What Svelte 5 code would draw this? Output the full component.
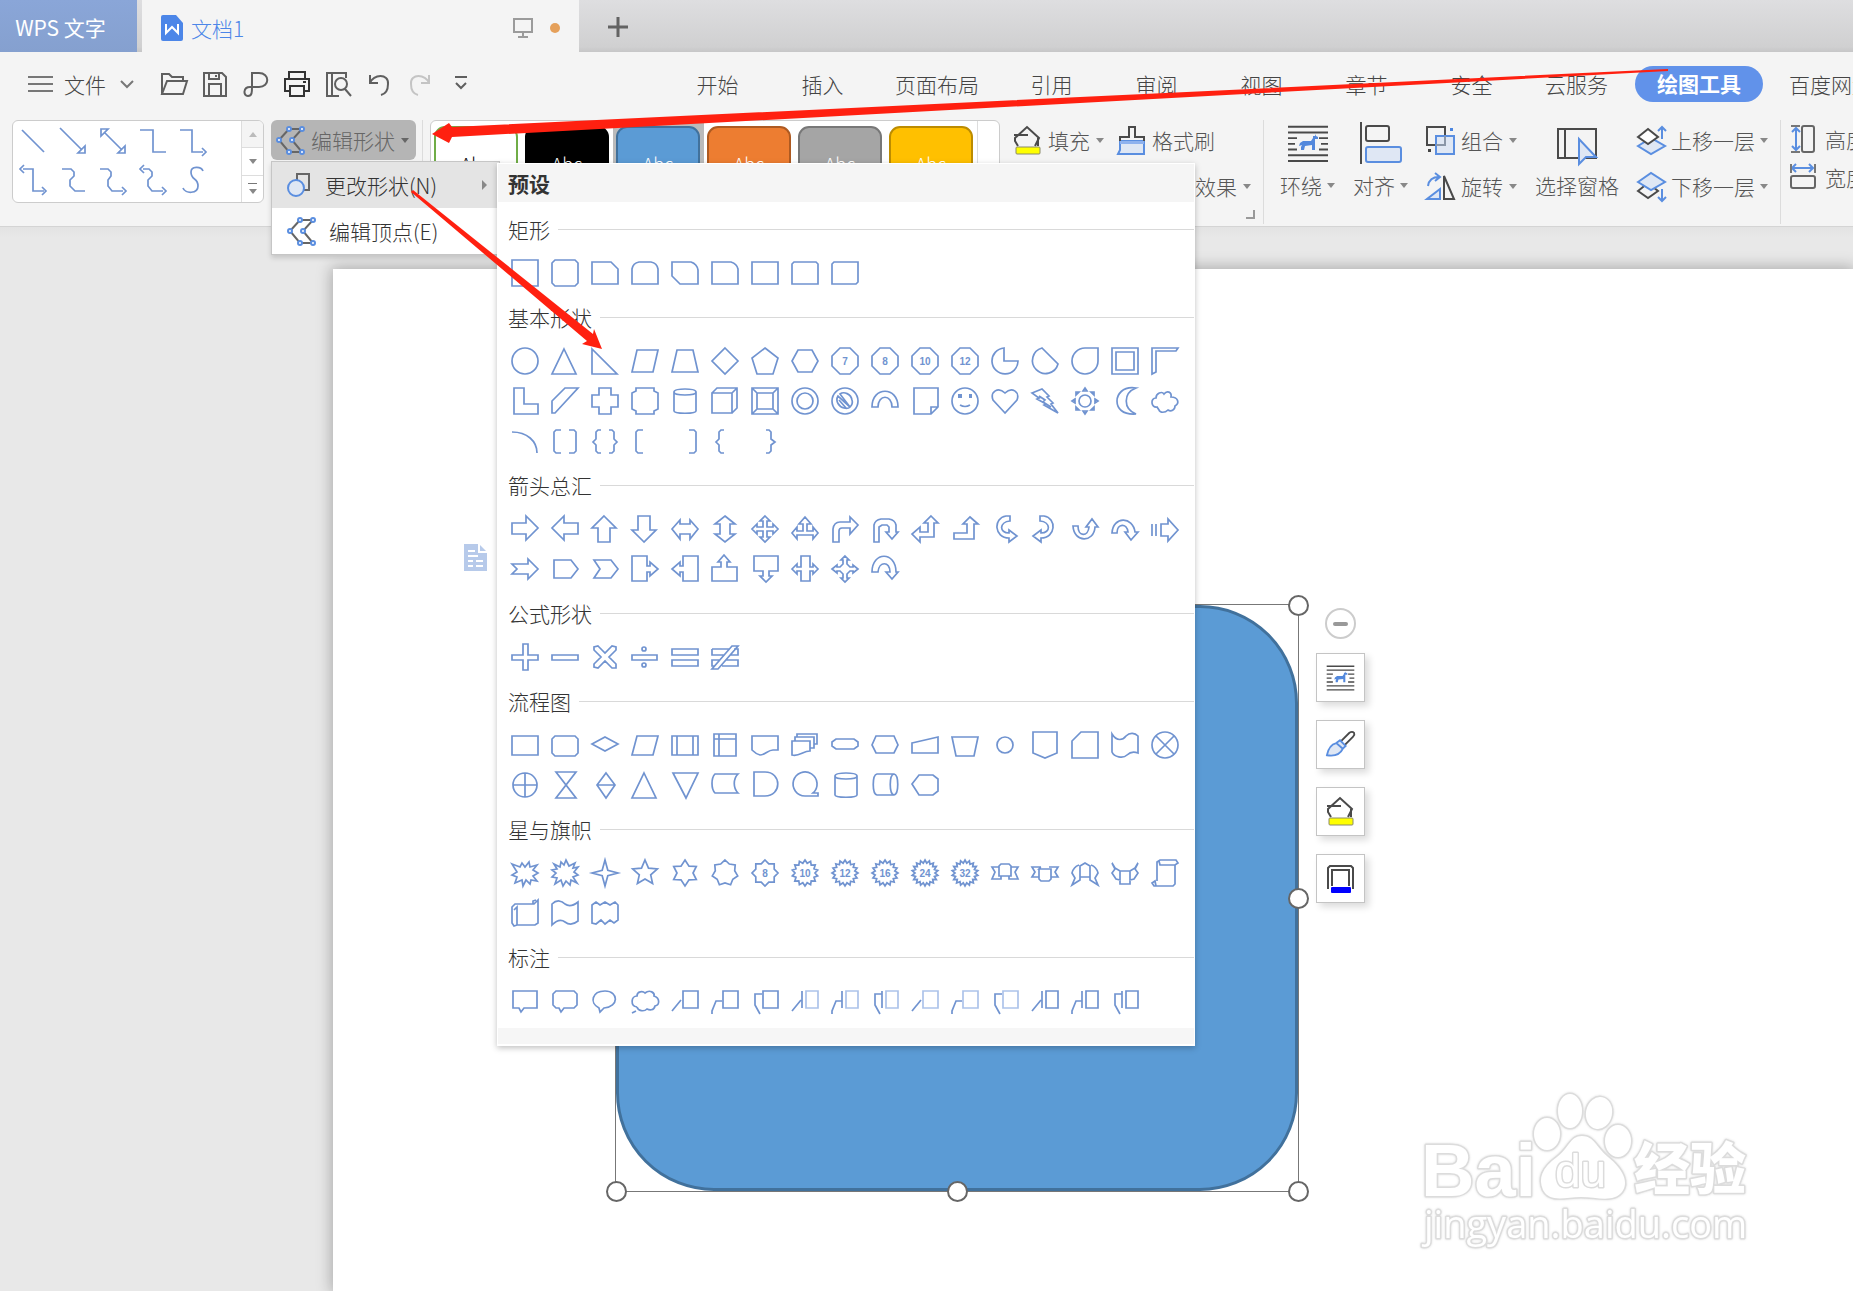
<script lang="ts">
  type Shape = { d: string; label?: string; light?: string; dots?: string };

  const box = "M1 3H27V25H1Z";
  const octagon = "M9 1H19L27 9V19L19 27H9L1 19V9Z";

  function circle(r: number, cx = 14, cy = 14): string {
    return `M${cx - r} ${cy}a${r} ${r} 0 1 0 ${r * 2} 0a${r} ${r} 0 1 0 ${-r * 2} 0Z`;
  }

  function star(points: number, outer: number, inner: number): string {
    const pts: string[] = [];
    for (let i = 0; i < points * 2; i++) {
      const r = i % 2 ? inner : outer;
      const a = (Math.PI * i) / points - Math.PI / 2;
      pts.push(`${(14 + r * Math.cos(a)).toFixed(1)} ${(14 + r * Math.sin(a)).toFixed(1)}`);
    }
    return `M${pts.join("L")}Z`;
  }

  function plain(...paths: string[]): Shape[] {
    return paths.map((d) => ({ d }));
  }

  const leaders = ["M1 24L10 13", "M1 27V24L5 14H11", "M11 7H4V18L9 27"];

  function callouts(bar: boolean, light: boolean): Shape[] {
    const frame = bar ? "M15 4H27V21H15Z" : "M12 4H27V21H12Z";
    return leaders.map((lead) => ({
      d: lead + (bar ? "M11 4V21" : "") + (light ? "" : frame),
      light: light ? frame : undefined,
    }));
  }

  const sections: { title: string; shapes: Shape[] }[] = [
    {
      title: "矩形",
      shapes: plain(
        "M1 1H27V27H1Z",
        "M4 1H24L27 4V24L24 27H4L1 24V4Z",
        "M1 3H20L27 10V25H1Z",
        "M1 25V10Q2 4 8 3H20Q26 4 27 10V25Z",
        "M1 3H20Q26 5 27 11V25H9L1 17Z",
        "M1 3H20Q26 5 27 10V25H1Z",
        box,
        "M1 25V5L3 3H25L27 5V25Z",
        "M1 5L3 3H27V23L25 25H1Z",
      ),
    },
    {
      title: "基本形状",
      shapes: [
        ...plain(
          circle(13),
          "M13 2L25 27H1Z",
          "M1 2V27H26Z",
          "M6 3H27L22 25H1Z",
          "M6 3H22L27 25H1Z",
          "M14 1L27 14L14 27L1 14Z",
          "M14 1L27 11L22 27H6L1 11Z",
          "M7 3H21L27 14L21 25H7L1 14Z",
        ),
        { d: octagon, label: "7" },
        { d: octagon, label: "8" },
        { d: octagon, label: "10" },
        { d: octagon, label: "12" },
        ...plain(
          "M13 1A13 13 0 1 0 27 14H13Z",
          "M11 1L27 17A13 13 0 1 1 11 1Z",
          "M27 1V14A13 13 0 1 1 14 1Z",
          "M1 1H27V27H1ZM5 5H23V23H5Z",
          "M1 27V1H27L25 4H5V25Z",
          "M3 1H13V17H27V27H3Z",
          "M14 1H27L4 26H1V14Z",
          "M8 1H20V8H27V20H20V27H8V20H1V8H8Z",
          "M5 1H23V4L27 6V22L23 24V27H5V24L1 22V6L5 4Z",
          "M3 5V24C3 27 25 27 25 24V5C25 1 3 1 3 5C3 9 25 9 25 5",
          "M1 6H21V26H1ZM1 6L6 1H26V21L21 26M21 6L26 1",
          "M1 1H27V27H1ZM6 6H22V22H6ZM1 1L6 6M27 1L22 6M1 27L6 22M27 27L22 22",
          circle(13) + circle(8),
          circle(13) + "M9 7C13 4 20 7 21 13C22 16 21 18 19 20ZM7 9C4 14 8 20 13 21C16 22 18 21 19 20ZM8 13L15 21",
          "M1 20C1 -1 27 -1 27 20H21C21 7 7 7 7 20Z",
          "M3 1H27V20L20 27H3ZM20 27V20H27",
        ),
        { d: circle(13) + "M9 18Q14 21 19 18", dots: "M7 7H11V11H7ZM18 7H21V11H18Z" },
        ...plain(
          "M14 26L2 13C-1 5 7 -1 14 6C21 -1 29 5 26 13Z",
          "M1 6L11 2L18 9L16 10L22 16L20 17L27 26L13 18L15 17L6 12L8 11ZM8 9L14 13L12 15L20 20",
          circle(6) + "M12 4L14 1L16 4ZM12 24L14 27L16 24ZM4 12L1 14L4 16ZM24 12L27 14L24 16ZM5 5H8L5 8ZM23 5H20L23 8ZM5 23H8L5 20ZM23 23H20L23 20Z",
          "M25 1C11 -1 6 8 6 14C6 21 11 28 25 27C12 22 12 6 25 1Z",
          "M6 20C0 21 -1 11 5 11C5 6 11 4 13 7C16 3 21 5 20 10C27 10 29 16 24 19C24 23 20 25 17 23C14 26 9 26 8 23Z",
          "M1 5C16 5 26 14 26 26",
          "M10 3H5L3 5V24L5 26H10M18 3H23L25 5V24L23 26H18",
          "M10 3H7L5 5V12L2 15L5 18V24L7 26H10M18 3H21L23 5V12L26 15L23 18V24L21 26H18",
          "M12 3H7L5 5V24L7 26H12",
          "M18 3H23L25 5V24L23 26H18",
          "M13 3H10L8 5V12L5 15L8 18V24L10 26H13",
          "M15 3H18L20 5V12L24 15L20 18V24L18 26H15",
        ),
      ],
    },
    {
      title: "箭头总汇",
      shapes: plain(
        "M1 8H15V1L27 13L15 25V19H1Z",
        "M27 8H13V1L1 13L13 25V19H27Z",
        "M13 1L25 13H19V27H7V13H1Z",
        "M13 27L1 15H7V1H19V15H25Z",
        "M1 14L9 5V9H19V5L27 14L19 24V19H9V24Z",
        "M14 1L24 9H19V19H24L14 27L4 19H9V9H4Z",
        "M14 1L19 6H16V12H22V9L27 14L22 19V16H16V22H19L14 27L9 22H12V16H6V19L1 14L6 9V12H12V6H9Z",
        "M14 2L20 9H16V16H22V12L27 18L22 24V20H6V24L1 18L6 12V16H12V9H8Z",
        "M2 27V14Q3 7 9 7H19V2L27 10L19 19V13H11Q8 13 8 16V27Z",
        "M3 27V10Q4 5 10 4H18Q24 5 25 10V17H27L21 24L15 17H18V12L16 10H11L8 12V27Z",
        "M20 1L27 8H23V22H9V27L1 19L9 12V17H17V8H13Z",
        "M19 2L27 9H23V24H3V18H16V9H12Z",
        "M19 1H15C2 3 3 23 18 23V27L26 21L18 15V18C8 18 8 7 19 6Z",
        "M9 1H13C26 3 25 23 10 23V27L2 21L10 15V18C20 18 20 7 9 6Z",
        "M2 11H7C7 22 17 22 18 12H15L21 4L27 12H24C23 28 3 28 2 11Z",
        "M1 18H6C6 8 16 8 17 17H14L20 25L27 17H24C22 1 2 1 1 18Z",
        "M1 9V21M5 9V21M10 9H17V4L27 15L17 26V21H10Z",
        "M1 9H17V4L27 14L17 24V19H1L6 14Z",
        "M3 5H20L27 14L20 23H3Z",
        "M3 5H20L27 14L20 23H3L9 14Z",
        "M1 1H16V11H19V7L27 14L19 21V17H16V26H1Z",
        "M27 1H12V11H9V7L1 14L9 21V17H12V26H27Z",
        "M1 12H10V7H7L13 0L19 7H16V12H26V26H1Z",
        "M3 1H27V16H18V21H21L15 27L9 21H12V16H3Z",
        "M1 14L6 9V12H10V1H19V12H22V9L27 14L22 19V16H19V26H10V16H6V19Z",
        "M14 1L18 5H16V9L19 12H22V10L27 14L22 18V16H19L16 19V23H18L14 27L10 23H12V19L9 16H6V18L1 14L6 10V12H9L12 9V5H10Z",
        "M1 17C1 -4 25 -4 25 17H27L21 24L15 17H19C19 6 8 6 7 17Z",
      ),
    },
    {
      title: "公式形状",
      shapes: plain(
        "M12 1H17V12H27V17H17V27H12V17H1V12H12Z",
        "M1 12H27V17H1Z",
        "M7 3L14 10L21 3L25 4V7L18 14L25 21V25L21 25L14 18L7 25L3 24V21L10 14L3 7V4Z",
        "M1 12H26V17H1Z" + circle(2, 13, 6) + circle(2, 13, 22),
        "M1 6H27V12H1ZM1 17H27V23H1Z",
        "M1 6H18M1 6V12H13M23 6H27V12H19M15 17H27V23H11M9 17H1V23H4M1 26H7L27 3H21Z",
      ),
    },
    {
      title: "流程图",
      shapes: plain(
        "M1 5H27V24H1Z",
        "M4 5H24L27 8V22L24 25H4L1 22V8Z",
        "M14 6L27 13L14 20L1 13Z",
        "M6 5H27L22 24H1Z",
        "M1 5H27V24H1ZM6 5V24M22 5V24",
        "M3 3H25V25H3ZM8 3V25M3 8H25",
        "M1 5H27V19H22C17 19 14 24 9 24Q5 23 1 19Z",
        "M1 10H19V20C12 20 8 26 1 24ZM4 10V6H23V17H19M6 6V3H26V13H23",
        "M5 8H23L27 11V15L23 18H5L1 15V11Z",
        "M5 5H23L27 14L23 22H5L1 14Z",
        "M1 12L27 6V22H1Z",
        "M1 6H27L23 25H5Z",
        circle(8),
        "M2 1H26V22L14 27L2 22Z",
        "M10 1H27V27H1V10Z",
        "M1 3C6 11 12 9 15 5C19 1 24 2 27 5V22C22 20 18 22 16 24C12 28 3 26 1 21Z",
        circle(13) + "M5 5L23 23M23 5L5 23",
        circle(12) + "M14 2V26M2 14H26",
        "M5 1H25L5 27H25Z",
        "M15 2L24 14L15 27L6 14ZM6 14H24",
        "M13 2L25 27H1Z",
        "M2 2H27L15 27Z",
        "M4 3H27C22 8 22 17 27 22H4C0 18 0 7 4 3Z",
        "M3 1H14C31 1 31 25 14 25H3Z",
        "M14 25A12 12 0 1 1 22 22H27V25Z",
        "M4 5V24C4 27 26 27 26 24V5C26 1 4 1 4 5C4 9 26 9 26 5",
        "M6 3H23C28 4 28 23 23 24H6C1 23 1 4 6 3ZM23 3C18 4 18 23 23 24",
        "M1 13L8 4H22L27 8V20L22 24H8Z",
      ),
    },
    {
      title: "星与旗帜",
      shapes: [
        ...plain(
          "M1 5L9 8L11 4L14 8L18 3L19 8L26 6L22 11L27 14L22 17L26 22L20 21L19 25L15 21L12 27L11 21L4 24L6 18L1 16L6 13Z",
          "M3 5L9 8L10 3L13 6L15 1L18 7L24 4L22 9L27 8L23 13L27 16L22 18L26 24L20 21L19 26L15 22L12 27L10 21L4 25L6 19L1 18L5 14L1 11L6 10Z",
          star(4, 13, 4),
          star(5, 13, 6),
          star(6, 13, 8),
          star(7, 13, 10),
        ),
        { d: star(8, 13, 10), label: "8" },
        { d: star(14, 13, 10), label: "10" },
        { d: star(16, 13, 10), label: "12" },
        { d: star(16, 13, 10), label: "16" },
        { d: star(18, 13, 10), label: "24" },
        { d: star(18, 13, 10), label: "32" },
        ...plain(
          "M8 8H1L4 13L1 20H10V17H18V20H27L24 13L27 8H20M8 17V7L10 5H18L20 7V17Z",
          "M10 8H1L4 13L1 18H8M18 8H27L24 13L27 18H20M8 10V20L10 22H18L20 20V10H8L10 8",
          "M8 6C5 7 2 10 1 14L4 19L1 26L9 21V7L14 4L19 7V21L27 26L24 19L27 14C26 10 23 7 20 6M9 18H19",
          "M1 4L4 10L1 14L5 20L9 21V12L4 9ZM27 4L24 10L27 14L23 20L19 21V12L24 9ZM9 12H19V25H9Z",
          "M6 22V3L9 1H25L27 4L24 6H9L8 2M24 6V25L22 27H3L1 24L4 22L5 27",
          "M1 8L4 5H23L27 1V24L24 26H6L3 27L1 24ZM6 26V8L3 11M22 5V2L25 1",
          "M1 5C6 0 11 2 14 5C18 8 22 7 27 3V22C22 26 18 26 14 23C10 20 6 21 1 26Z",
          "M1 6L5 3L9 6L14 3L19 6L24 3L27 6V21L23 24L19 21L14 25L10 21L5 25L1 24Z",
        ),
      ],
    },
    {
      title: "标注",
      shapes: [
        ...plain(
          "M2 4H26V21H13L10 25L8 21H2Z",
          "M5 4H23L26 7V18L23 21H13L10 25L8 21H5L2 18V7Z",
          "M8 21C-2 16 1 4 14 4C28 4 28 20 13 21L9 25Z",
          "M6 20C-1 19 0 9 6 9C6 4 12 4 14 6C19 2 24 6 23 9C29 11 29 18 24 19C23 24 18 23 16 22C13 25 7 24 6 20M5 24L1 26",
        ),
        ...callouts(false, false),
        ...callouts(true, true),
        ...callouts(false, true),
        ...callouts(true, false),
      ],
    },
  ];

  const connectors = [
    "M3 3L25 25",
    "M1 1L22 22M26 26V19L19 26Z",
    "M6 6L22 22M2 2V9L9 2ZM26 26V19L19 26Z",
    "M1 3H14V25H27",
    "M1 3H13V25H24M23 21L27 25L23 29",
    "M4 3H14V25H25M5 -1L1 3L5 7M23 21L27 25L23 29",
    "M3 3H12L15 6V10L11 14V20L16 25H26",
    "M1 3H9L12 6V10L9 14V20L13 25H24M23 21L27 25L23 29",
    "M4 3H10L13 6V10L9 14V20L13 25H24M5 -1L1 3L5 7M23 21L27 25L23 29",
    "M24 5C22 0 12 0 12 6C12 15 19 11 19 20C19 28 6 28 4 22",
  ];

  const quickTools = [
    { name: "打开", d: "M2 24V4H9L12 7H23V11M2 24L7 11H27L23 24Z" },
    { name: "保存", d: "M3 3H21L25 7V26H3ZM8 26V14H20V26M8 3V9H18V3M15 5V7" },
    { name: "输出为PDF", d: "M10 17V3H17C28 3 28 17 17 17H8C1 17 1 26 6 26C10 26 10 22 10 17" },
    { name: "打印", d: "M6 9V2H22V9M6 21H2V9H26V21H22M7 16H21V26H7ZM20 12H23", dark: true },
    { name: "打印预览", d: "M15 26H3V3H22V8M8 3V26M17 8A6 6 0 1 0 17 20A6 6 0 1 0 17 8M21 19L27 26" },
    { name: "撤销", d: "M5 5V13H13M5 13C8 4 24 3 23 14C23 20 20 24 16 25" },
    { name: "恢复", d: "M23 5V13H15M23 13C20 4 4 3 5 14C5 20 8 24 12 25", faded: true },
    { name: "更多", d: "M8 7H20M9 13L14 18L19 13" },
  ];

  const menus = ["开始", "插入", "页面布局", "引用", "审阅", "视图", "章节", "安全", "云服务", "绘图工具", "百度网盘"];
  let activeMenu = $state("绘图工具");

  const styles = ["green", "black", "blue", "orange", "gray", "yellow"];
  let activeStyle = $state("blue");
</script>

{#snippet shapeIcon(shape: Shape)}
  <svg class="shape" viewBox="0 0 28 28" aria-hidden="true">
    <path d={shape.d} />
    {#if shape.light}<path class="pale" d={shape.light} />{/if}
    {#if shape.dots}<path class="solid" d={shape.dots} />{/if}
    {#if shape.label}<text x="14" y="18">{shape.label}</text>{/if}
  </svg>
{/snippet}

{#snippet vertexIcon()}
  <svg class="icon" viewBox="0 0 29 29" aria-hidden="true">
    <path class="ink fine" d="M3 14L13 3H26L16 14L26 26H13Z" />
    <g class="accent hollow">
      <circle cx="3" cy="14" r="2" /><circle cx="13" cy="3" r="2" /><circle cx="26" cy="3" r="2" />
      <circle cx="16" cy="14" r="2" /><circle cx="26" cy="26" r="2" /><circle cx="13" cy="26" r="2" />
    </g>
  </svg>
{/snippet}

{#snippet wrapIcon()}
  <svg class="wide" viewBox="0 0 42 42" aria-hidden="true">
    <path class="ink" d="M1 5H41M1 11H41M1 17H10M32 17H41M1 23H8M34 23H41M1 29H10M32 29H41M1 35H41M1 41H41" transform="scale(1 .95)" />
    <path class="dog" d="M13 21L16 19H24L26 16V14L28 14L29 12V14L31 15V17H28V28H25V23L18 24L17 28H14V25L15 23L12 24Z" />
  </svg>
{/snippet}

{#snippet bucketIcon()}
  <svg class="icon" viewBox="0 0 29 29" aria-hidden="true">
    <path class="ink" d="M5 20L2 15V12L14 1L26 12L22 20M1 9H15M25 12V20" />
    <rect class="fill-yellow" x="3" y="21" width="24" height="7" rx="1" />
  </svg>
{/snippet}

<div class="app">
  <header class="tabs">
    <button class="tab home">WPS 文字</button>
    <div class="tab doc">
      <svg class="logo" viewBox="0 0 22 26" aria-hidden="true">
        <path d="M2 0H15L22 8V24Q22 26 20 26H2Q0 26 0 24V2Q0 0 2 0Z" fill="#4c86e8" />
        <path d="M5 9V18L11 12L17 18V9" fill="none" stroke="#fff" stroke-width="2" />
      </svg>
      <span class="doc-name">文档1</span>
      <svg class="monitor" viewBox="0 0 22 22" aria-hidden="true">
        <path d="M2 2H20V15H2ZM11 15V20M6 20H16" fill="none" stroke="#9b9b9b" stroke-width="2" />
      </svg>
      <span class="unsaved"></span>
    </div>
    <button class="add" aria-label="新建">
      <svg viewBox="0 0 22 22" aria-hidden="true"><path d="M11 1V21M1 11H21" stroke="#636363" stroke-width="3" /></svg>
    </button>
  </header>

  <div class="menubar">
    <button class="file">
      <svg class="icon" viewBox="0 0 29 29" aria-hidden="true"><path class="thin" d="M3 7H28M3 14H28M3 21H28" /></svg>
      文件
      <svg class="chev" viewBox="0 0 14 14" aria-hidden="true"><path class="thin" d="M1 4L7 10L13 4" /></svg>
    </button>
    <div class="quick">
      {#each quickTools as tool}
        <button class:dark={tool.dark} class:faded={tool.faded} aria-label={tool.name}>
          <svg viewBox="0 0 28 28" aria-hidden="true"><path d={tool.d} /></svg>
        </button>
      {/each}
    </div>
    <nav>
      {#each menus as menu}
        <button class:active={menu === activeMenu} onclick={() => (activeMenu = menu)}>{menu}</button>
      {/each}
    </nav>
  </div>

  <div class="ribbon">
    <div class="lines">
      <div class="lines-grid">
        {#each connectors as d, i}
          <button aria-label="线条 {i + 1}">{@render shapeIcon({ d })}</button>
        {/each}
      </div>
      <div class="scroller">
        <button aria-label="上翻" class="off"><i class="tri up"></i></button>
        <button aria-label="下翻"><i class="tri"></i></button>
        <button aria-label="展开"><i class="bar"></i><i class="tri"></i></button>
      </div>
    </div>

    <div class="edit-wrap">
      <button class="edit">{@render vertexIcon()}编辑形状<i class="tri"></i></button>

      <div class="menu">
        <button class="menu-item open">
          <svg class="change" viewBox="0 0 25 29" aria-hidden="true">
            <path class="ink fine" d="M10 3H22V19H10Z" />
            <ellipse cx="9" cy="17" rx="8" ry="8" class="accent tint" />
          </svg>
          <span>更改形状(N)</span>
          <i class="tri right"></i>
        </button>
        <button class="menu-item">{@render vertexIcon()}<span>编辑顶点(E)</span></button>

        <div class="panel">
          <h2>预设</h2>
          <div class="panel-body">
            {#each sections as section}
              <section>
                <h3>{section.title}</h3>
                <div class="shapes">
                  {#each section.shapes as shape, i}
                    <button aria-label="{section.title} {i + 1}">{@render shapeIcon(shape)}</button>
                  {/each}
                </div>
              </section>
            {/each}
          </div>
          <div class="panel-foot"></div>
        </div>
      </div>
    </div>

    <div class="sep"></div>

    <div class="style-gallery">
      {#each styles as name}
        <button class="swatch-cell" class:picked={name === activeStyle} onclick={() => (activeStyle = name)}>
          <span class="swatch {name}">Abc</span>
        </button>
      {/each}
      <div class="scroller short">
        <button aria-label="展开样式"><i class="bar"></i><i class="tri"></i></button>
      </div>
    </div>

    <div class="fill-group">
      <div class="row">
        <button class="tool">{@render bucketIcon()}填充<i class="tri"></i></button>
        <button class="tool">
          <svg class="icon" viewBox="0 0 29 29" aria-hidden="true">
            <path class="accent tint" d="M3 15H27V28H1L3 24Z" />
            <path d="M3 15H27V18H3Z" fill="#8fb2ee" />
            <path class="ink" d="M3 15V11H12V1H18V11H27V15" />
          </svg>格式刷
        </button>
      </div>
      <div class="row spread">
        <button class="tool">
          <svg class="icon" viewBox="0 0 29 29" aria-hidden="true"><path class="ink" d="M3 3H26V20H3Z" /></svg>轮廓<i class="tri"></i>
        </button>
        <button class="tool">
          <svg class="icon" viewBox="0 0 29 29" aria-hidden="true"><path class="ink" d="M5 5H24V24H5Z" /></svg>效果<i class="tri"></i>
        </button>
      </div>
      <span class="corner"></span>
    </div>

    <div class="sep"></div>

    <div class="arrange">
      <button class="tall">{@render wrapIcon()}<span>环绕<i class="tri"></i></span></button>
      <button class="tall">
        <svg class="wide" viewBox="0 0 42 42" aria-hidden="true">
          <path class="ink" d="M1 0V42" />
          <rect class="ink" x="6" y="4" width="23" height="15" rx="2" />
          <rect class="accent tint" x="6" y="25" width="35" height="15" rx="2" />
        </svg>
        <span>对齐<i class="tri"></i></span>
      </button>
      <div class="stack">
        <button class="tool">
          <svg class="icon" viewBox="0 0 29 29" aria-hidden="true">
            <path class="ink" d="M1 1H19V19H1Z" />
            <path class="accent tint" d="M10 10H28V28H10Z" />
            <path d="M10 19H19V10" fill="none" stroke="#8a96a8" stroke-width="2" />
            <path d="M24 2H27V5H24Z" fill="#4c86e0" /><path d="M2 23H5V26H2Z" fill="#444" />
          </svg>组合<i class="tri"></i>
        </button>
        <button class="tool">
          <svg class="icon" viewBox="0 0 29 29" aria-hidden="true">
            <path class="accent tint" d="M14 27H1L14 17Z" />
            <path class="accent none" d="M2 14C3 7 7 5 13 5M9 1L14 5L9 9" />
            <path class="ink" d="M18 27V4L28 27Z" />
          </svg>旋转<i class="tri"></i>
        </button>
      </div>
      <button class="tall">
        <svg class="wide" viewBox="0 0 42 42" aria-hidden="true">
          <path class="ink" d="M2 7H40V36H2ZM9 7V36" />
          <path class="accent tint" d="M23 17V42L30 35H40Z" />
        </svg>
        <span>选择窗格</span>
      </button>
      <div class="stack layers">
        <button class="tool">
          <svg class="icon" viewBox="0 0 29 29" aria-hidden="true">
            <path class="accent tint" d="M1 20L14 12L28 20L14 28Z" />
            <path class="ink white" d="M1 11L11 3L21 11L11 18Z" />
            <path class="accent none" d="M25 13V2M21 5L25 1L29 5" />
          </svg>上移一层<i class="tri"></i>
        </button>
        <button class="tool">
          <svg class="icon" viewBox="0 0 29 29" aria-hidden="true">
            <path class="ink" d="M1 19L11 11L21 19L11 26Z" />
            <path class="accent tint" d="M1 10L14 1L28 10L14 18Z" />
            <path class="accent none" d="M25 17V28M21 25L25 29L29 25" />
          </svg>下移一层<i class="tri"></i>
        </button>
      </div>
    </div>

    <div class="sep"></div>

    <div class="size">
      <label for="height">
        <svg class="icon" viewBox="0 0 29 29" aria-hidden="true">
          <path class="accent none" d="M6 3V25M2 7L6 3L10 7M2 21L6 25L10 21" />
          <path class="thin" d="M1 1H10M1 27H10" />
          <rect class="ink fine" x="12" y="1" width="12" height="26" rx="2" />
        </svg>高度
      </label>
      <input id="height" />
      <label for="width">
        <svg class="icon" viewBox="0 0 29 29" aria-hidden="true">
          <path class="accent none" d="M3 5H22M6 1L2 5L6 9M19 1L23 5L19 9" />
          <path class="thin" d="M1 1V10M25 1V10" />
          <rect class="ink fine" x="1" y="13" width="24" height="12" rx="2" />
        </svg>宽度
      </label>
      <input id="width" />
    </div>
  </div>

  <main>
    <div class="page">
      <svg class="para" viewBox="0 0 24 28" aria-hidden="true">
        <path d="M0 0H15L23 8V27H0Z" fill="#b7caea" />
        <path d="M15 0V8H23M4 7H11M4 12H14M4 17H9M12 17H19M4 22H9M12 22H19" fill="none" stroke="#fff" stroke-width="2" />
      </svg>

      <div class="selection">
        <div class="rounded"></div>
        <span class="handle tr"></span>
        <span class="handle mr"></span>
        <span class="handle br"></span>
        <span class="handle bm"></span>
        <span class="handle bl"></span>
      </div>

      <div class="floating">
        <button class="collapse" aria-label="收起"><i></i></button>
        <button aria-label="布局选项">{@render wrapIcon()}</button>
        <button aria-label="形状样式">
          <svg viewBox="0 0 31 29" aria-hidden="true">
            <path class="ink white" d="M14 13L25 2Q28 0 30 2Q31 4 29 6L18 17Z" />
            <path class="accent tint" d="M1 26Q3 15 11 13L18 19Q14 28 1 26ZM11 13L15 10L21 16L18 19" />
          </svg>
        </button>
        <button aria-label="形状填充">{@render bucketIcon()}</button>
        <button aria-label="形状轮廓">
          <svg viewBox="0 0 29 29" aria-hidden="true">
            <path class="ink" d="M2 25V4L4 2H25L27 4V25M6 22V6H23V22" />
            <rect x="5" y="23" width="20" height="6" rx="1" fill="#00f" />
          </svg>
        </button>
      </div>
    </div>

    <svg class="watermark" viewBox="0 0 350 180" aria-hidden="true">
      <g class="mark">
        <text class="bai" x="11" y="115">Bai</text>
        <ellipse cx="137" cy="53" rx="13" ry="16" />
        <ellipse cx="160" cy="30" rx="12" ry="17" />
        <ellipse cx="189" cy="32" rx="13" ry="16" transform="rotate(12 189 32)" />
        <ellipse cx="208" cy="60" rx="13" ry="16" />
        <path d="M172 55C184 55 186 66 198 76C214 89 219 102 212 111C203 122 187 116 171 116C155 116 140 122 133 109C128 97 132 87 147 76C159 67 160 55 172 55Z" />
        <text class="du" x="145" y="106">du</text>
        <text class="exp" x="224" y="108">经验</text>
        <text class="url" x="14" y="157">jingyan.baidu.com</text>
      </g>
    </svg>
  </main>

  <svg class="arrows" aria-hidden="true">
    <path d="M432 134L449 123L452 127L1668 69V71L452 137L449 143Z" />
    <path d="M413 190L593 334L594 329L602 349L582 344L587 341L411 192Z" />
  </svg>
</div>

<style>
  :global(body) {
    margin: 0;
  }

  .app {
    position: relative;
    display: flex;
    flex-direction: column;
    min-height: 100vh;
    overflow: hidden;
    background: #f4f4f4;
    color: #444;
    font-family: "Noto Sans CJK SC", sans-serif;
    font-size: 21px;
    font-weight: 300;
    line-height: 30px;
  }

  button {
    margin: 0;
    padding: 0;
    border: 0;
    background: none;
    color: inherit;
    font: inherit;
    white-space: nowrap;
  }

  svg {
    display: block;
    flex: none;
    overflow: visible;
  }

  .icon {
    width: 29px;
    height: 29px;
  }

  .change {
    width: 25px;
    height: 29px;
  }

  .wide {
    width: 42px;
    height: 42px;
  }

  .ink {
    fill: none;
    stroke: #4a4a4a;
    stroke-width: 2;
  }

  .thin {
    fill: none;
    stroke: #777;
    stroke-width: 2;
  }

  .fine {
    stroke: #666;
    stroke-width: 2;
  }

  .white {
    fill: #fff;
  }

  .accent {
    fill: none;
    stroke: #5a8ee0;
    stroke-width: 2;
  }

  .hollow {
    fill: #fff;
  }

  .tint {
    fill: #dfe7f4;
  }

  .none {
    fill: none;
  }

  .dog {
    fill: #5388dc;
  }

  .fill-yellow {
    fill: #ff0;
    stroke: #8a8a6a;
    stroke-width: 1;
  }

  .tri {
    display: block;
    flex: none;
    width: 0;
    height: 0;
    border: 4px solid transparent;
    border-top: 5px solid #888;
    border-bottom: 0;
  }

  .tri.up {
    border-top: 0;
    border-bottom: 5px solid #bbb;
  }

  .tri.right {
    border: 5px solid transparent;
    border-left: 5px solid #888;
    border-right: 0;
  }

  .bar {
    width: 9px;
    height: 1px;
    margin-bottom: 5px;
    background: #777;
  }

  /* window tabs */
  .tabs {
    display: flex;
    height: 52px;
    background: linear-gradient(#dedee0, #d0d0d1 90%, #c6c6c7);
  }

  .home {
    width: 137px;
    margin-right: 5px;
    padding: 2px 16px 0 0;
    background: linear-gradient(#8aa6d8, #85a0cf);
    color: #fff;
    font-weight: 400;
  }

  .doc {
    display: flex;
    align-items: center;
    box-sizing: border-box;
    width: 437px;
    padding: 4px 19px 0 19px;
    background: #f4f4f4;
  }

  .logo {
    width: 22px;
    height: 26px;
  }

  .doc-name {
    flex: 1;
    margin-left: 8px;
    color: #4c86e8;
  }

  .monitor {
    width: 22px;
    height: 22px;
  }

  .unsaved {
    width: 10px;
    height: 10px;
    margin-left: 16px;
    border-radius: 50%;
    background: #e5a05a;
  }

  .add {
    padding: 2px 28px 0;
  }

  .add svg {
    width: 22px;
  }

  /* menu row */
  .menubar {
    display: flex;
    align-items: center;
    box-sizing: border-box;
    height: 68px;
    padding: 0 0 4px 25px;
  }

  .file {
    display: flex;
    align-items: center;
    gap: 10px;
  }

  .chev {
    width: 14px;
    margin-left: 4px;
  }

  .quick {
    display: flex;
    gap: 13px;
    margin-left: 26px;
  }

  .quick svg {
    width: 28px;
    fill: none;
    stroke: #5f5f5f;
    stroke-width: 2;
  }

  .quick .dark svg {
    stroke: #333;
  }

  .quick .faded svg {
    stroke: #c4c4c4;
  }

  nav {
    display: flex;
    align-items: center;
    margin-left: 190px;
  }

  nav button {
    min-width: 105px;
    padding: 0 20px;
    flex: none;
  }

  nav .active {
    height: 36px;
    margin: 0 6px;
    padding: 0 22px 2px;
    border-radius: 18px;
    background: #6192ea;
    color: #fff;
    font-weight: 700;
  }

  /* ribbon */
  .ribbon {
    display: flex;
    flex: none;
    height: 106px;
    padding-left: 12px;
    border-bottom: 1px solid #d4d4d4;
    color: #555;
  }

  .ribbon > * {
    flex: none;
  }

  .lines {
    display: flex;
    box-sizing: border-box;
    width: 252px;
    height: 83px;
    overflow: hidden;
    border: 1px solid #ccc;
    border-radius: 6px;
    background: #fff;
  }

  .lines-grid {
    display: grid;
    flex: 1;
    grid-template-columns: repeat(5, 40px);
    grid-auto-rows: 39px;
    padding-bottom: 3px;
    align-content: center;
  }

  .lines-grid button,
  .shapes button {
    display: flex;
    align-items: center;
    justify-content: center;
  }

  .shape {
    width: 28px;
    height: 28px;
    fill: none;
    stroke: #7093d0;
    stroke-width: 1.7;
  }

  .shape .pale {
    stroke: #adc3ea;
  }

  .shape .solid {
    fill: #7093d0;
    stroke: none;
  }

  .shape text {
    fill: #7093d0;
    stroke: none;
    font: 700 10px "Liberation Sans", sans-serif;
    text-anchor: middle;
  }

  .scroller {
    display: flex;
    flex-direction: column;
    width: 21px;
    border-left: 1px solid #ddd;
  }

  .scroller button {
    display: flex;
    flex: 1;
    flex-direction: column;
    align-items: center;
    justify-content: center;
    width: 100%;
    border-top: 1px solid #ddd;
  }

  .scroller .off {
    border-top: 0;
    background: #f4f4f4;
  }

  .short {
    justify-content: flex-end;
    margin-left: auto;
  }

  .short button {
    flex: 0 0 44px;
    border-top: 0;
  }

  .edit-wrap {
    position: relative;
    margin-left: 7px;
  }

  .edit {
    display: flex;
    align-items: center;
    gap: 6px;
    height: 40px;
    padding: 0 7px 0 5px;
    border-radius: 6px;
    background: #b5b5b5;
    color: #666;
  }

  .edit .tri {
    border-top-color: #666;
  }

  .menu {
    position: absolute;
    z-index: 2;
    top: 41px;
    left: 0;
    width: 227px;
    border: 1px solid #c6c6c6;
    background: #fff;
    box-shadow: 0 3px 5px rgba(0, 0, 0, 0.15);
    color: #333;
  }

  .menu-item {
    display: flex;
    align-items: center;
    width: 100%;
    height: 46px;
    padding: 0 12px 0 15px;
    text-align: left;
  }

  .menu-item span {
    flex: 1;
    margin-left: 13px;
  }

  .open {
    background: #e4e4e4;
  }

  .panel {
    position: absolute;
    top: 1px;
    left: 225px;
    width: 696px;
    border: 1px solid #fff;
    background: #fff;
    box-shadow: 0 2px 6px rgba(0, 0, 0, 0.25);
  }

  h2 {
    margin: 0;
    padding: 0 10px;
    background: #f5f5f5;
    font-size: 21px;
    font-weight: 700;
    line-height: 38px;
  }

  .panel-body {
    padding: 3px 0 7px;
  }

  h3 {
    display: flex;
    align-items: center;
    gap: 8px;
    height: 48px;
    margin: 0 0 0 10px;
    font-size: 21px;
    font-weight: 300;
  }

  h3::after {
    flex: 1;
    height: 1px;
    background: #d9d9d9;
    content: "";
  }

  .shapes {
    display: grid;
    grid-template-columns: repeat(17, 40px);
    grid-auto-rows: 40px;
    padding-left: 7px;
  }

  .panel-foot {
    height: 16px;
    margin-bottom: 1px;
    background: #f6f6f6;
  }

  .sep {
    width: 1px;
    height: 104px;
    background: #dcdcdc;
  }

  .edit-wrap + .sep {
    margin: 0 7px 0 6px;
  }

  .style-gallery {
    display: flex;
    box-sizing: border-box;
    width: 570px;
    height: 83px;
    overflow: hidden;
    border: 1px solid #ccc;
    border-radius: 6px;
    background: #fff;
  }

  .swatch-cell {
    width: 91px;
    padding: 4px 4px 0 3px;
  }

  .picked {
    background: #bbb;
  }

  .swatch {
    display: block;
    box-sizing: border-box;
    height: 75px;
    border: 2px solid;
    border-radius: 11px;
    color: #fff;
    font-size: 18px;
    line-height: 70px;
  }

  .green {
    border-color: #70ad47;
    background: #fff;
    color: #000;
  }

  .black {
    border-color: #000;
    background: #000;
  }

  .blue {
    border-color: #41719c;
    background: #5b9bd5;
  }

  .orange {
    border-color: #ae5a21;
    background: #ed7d31;
  }

  .gray {
    border-color: #787878;
    background: #a5a5a5;
  }

  .yellow {
    border-color: #bc8c00;
    background: #ffc000;
  }

  .fill-group {
    position: relative;
    padding: 0 12px 0 13px;
  }

  .row {
    display: flex;
    gap: 13px;
    width: 238px;
    margin-bottom: 6px;
  }

  .spread {
    justify-content: space-between;
  }

  .tool {
    display: flex;
    align-items: center;
    gap: 6px;
    height: 40px;
  }

  .layers .tool {
    gap: 5px;
  }

  .corner {
    position: absolute;
    right: 8px;
    bottom: 7px;
    width: 7px;
    height: 7px;
    border: solid #999;
    border-width: 0 2px 2px 0;
  }

  .arrange {
    display: flex;
    gap: 18px;
    padding: 0 12px 0 16px;
  }

  .tall {
    display: flex;
    flex-direction: column;
    align-items: center;
    height: 86px;
    padding-top: 2px;
    box-sizing: border-box;
  }

  .tall span {
    display: flex;
    align-items: center;
    gap: 5px;
    height: 42px;
  }

  .stack {
    display: grid;
    gap: 6px;
    align-content: start;
  }

  .size {
    display: grid;
    grid-template-columns: auto 90px;
    grid-auto-rows: 38px;
    align-content: start;
    margin-left: 9px;
  }

  .size label {
    display: flex;
    align-items: center;
    gap: 6px;
  }

  .size input {
    width: 80px;
    height: 28px;
    border: 1px solid #ccc;
  }

  /* document area */
  main {
    position: relative;
    display: flex;
    flex: 1;
    padding: 42px 0 0 333px;
    background: linear-gradient(#e3e3e3, #e8e8e8 10px);
  }

  .page {
    position: relative;
    flex: 1;
    min-height: 960px;
    background: #fff;
    box-shadow: 0 0 14px 2px rgba(0, 0, 0, 0.26);
  }

  .para {
    position: absolute;
    top: 275px;
    left: 131px;
    width: 24px;
  }

  .selection {
    position: absolute;
    top: 335px;
    left: 282px;
    width: 682px;
    height: 586px;
    border: 1px solid #777;
  }

  .rounded {
    box-sizing: border-box;
    height: 100%;
    border: 3px solid #41719c;
    border-radius: 98px;
    background: #5b9bd5;
  }

  .handle {
    position: absolute;
    width: 17px;
    height: 17px;
    margin: -10px;
    border: 2px solid #666;
    border-radius: 50%;
    background: #fff;
  }

  .tr {
    top: 0;
    left: 100%;
  }

  .mr {
    top: 50%;
    left: 100%;
  }

  .br {
    top: 100%;
    left: 100%;
  }

  .bm {
    top: 100%;
    left: 50%;
  }

  .bl {
    top: 100%;
    left: 0;
  }

  .floating {
    position: absolute;
    top: 339px;
    left: 983px;
    display: grid;
    gap: 18px;
    justify-items: center;
  }

  .floating button {
    display: grid;
    place-items: center;
    box-sizing: border-box;
    width: 49px;
    height: 49px;
    border: 1px solid #c4c4c4;
    background: #fff;
    box-shadow: 4px 4px 7px rgba(0, 0, 0, 0.14);
  }

  .floating svg {
    width: 29px;
    height: 29px;
  }

  .floating .collapse {
    width: 31px;
    height: 31px;
    margin-bottom: -4px;
    border: 2px solid #ccc;
    border-radius: 50%;
    box-shadow: none;
  }

  .collapse i {
    width: 15px;
    height: 4px;
    border-radius: 2px;
    background: #999;
  }

  .watermark {
    position: absolute;
    right: 93px;
    bottom: 30px;
    width: 350px;
    height: 180px;
  }

  .mark {
    fill: #fff;
    stroke: #dcdcdc;
    stroke-width: 3;
    stroke-linejoin: round;
    paint-order: stroke;
    filter: drop-shadow(0 0 1px #ddd);
  }

  .bai {
    font: 700 74px "Liberation Sans", sans-serif;
  }

  .du {
    font: 400 46px "Liberation Sans", sans-serif;
  }

  .exp {
    font: 900 56px "Noto Sans CJK SC", sans-serif;
  }

  .url {
    font: 400 38px "Open Sans", sans-serif;
  }

  .arrows {
    position: absolute;
    z-index: 3;
    inset: 0;
    width: 100%;
    height: 100%;
    fill: #ff2010;
    pointer-events: none;
  }
</style>
